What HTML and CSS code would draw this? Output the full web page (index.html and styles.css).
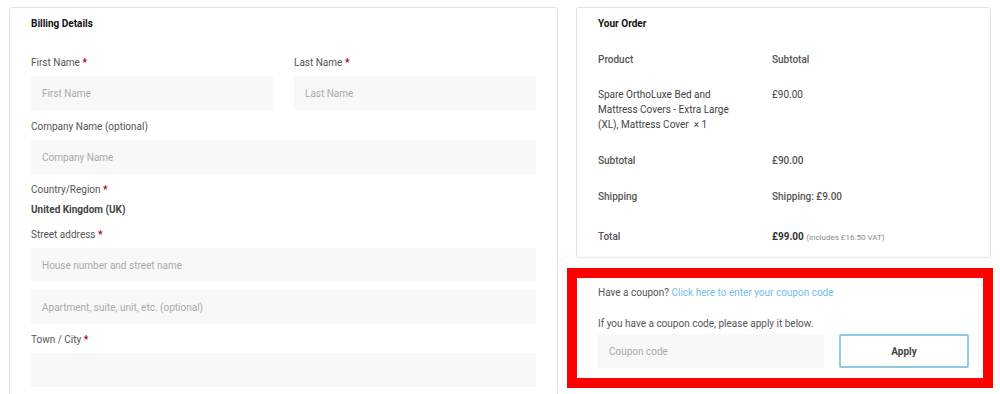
FILE: index.html
```html
<!DOCTYPE html>
<html lang="en">
<head>
  <meta charset="UTF-8">
  <title>Checkout</title>
  <link rel="stylesheet" href="styles.css">
</head>
<body>

<div class="checkout">
  <div class="card billing">
    <h3>Billing Details</h3>

    <div class="row">
      <div class="form-group">
        <label>First Name <abbr>*</abbr></label>
        <input type="text" placeholder="First Name">
      </div>
      <div class="form-group">
        <label>Last Name <abbr>*</abbr></label>
        <input type="text" placeholder="Last Name">
      </div>
    </div>

    <div class="form-group">
      <label>Company Name (optional)</label>
      <input type="text" placeholder="Company Name">
    </div>

    <div class="form-group tight">
      <label>Country/Region <abbr>*</abbr></label>
      <strong class="country">United Kingdom (UK)</strong>
    </div>

    <div class="form-group">
      <label>Street address <abbr>*</abbr></label>
      <input type="text" placeholder="House number and street name">
    </div>

    <div class="form-group">
      <input type="text" placeholder="Apartment, suite, unit, etc. (optional)">
    </div>

    <div class="form-group">
      <label>Town / City <abbr>*</abbr></label>
      <input type="text">
    </div>

    <div class="form-group">
      <label>Postcode <abbr>*</abbr></label>
      <input type="text">
    </div>
  </div>

  <div class="side">
    <div class="card order">
      <h3>Your Order</h3>
      <table>
        <tr class="head">
          <td class="name">Product</td>
          <td>Subtotal</td>
        </tr>
        <tr class="item">
          <td class="name">Spare OrthoLuxe Bed and Mattress Covers - Extra Large (XL), Mattress Cover&nbsp;&nbsp;<span class="qty">×&nbsp;1</span></td>
          <td>£90.00</td>
        </tr>
        <tr class="sum">
          <td class="name">Subtotal</td>
          <td>£90.00</td>
        </tr>
        <tr class="sum">
          <td class="name">Shipping</td>
          <td>Shipping: £9.00</td>
        </tr>
        <tr class="sum total">
          <td class="name">Total</td>
          <td><strong>£99.00</strong> <small>(includes £16.50 VAT)</small></td>
        </tr>
      </table>
    </div>

    <div class="coupon">
      <p>Have a coupon? <a href="#">Click here to enter your coupon code</a></p>
      <p class="hint">If you have a coupon code, please apply it below.</p>
      <div class="coupon-row">
        <input type="text" placeholder="Coupon code">
        <button>Apply</button>
      </div>
    </div>
  </div>
</div>

</body>
</html>
```

FILE: styles.css
```css
body {
  font-family: Roboto, "Liberation Sans", Arial, sans-serif;
  font-size: 10px;
  color: #555;
  background: #fff;
  margin: 0;
  padding: 7px 9px;
}

.checkout {
  display: flex;
  gap: 18px;
  align-items: flex-start;
}

.card {
  background: #fff;
  border: 1px solid #e3e3e3;
  border-radius: 3px;
}

h3 {
  margin: 0;
  font-size: 10px;
  line-height: 16px;
  font-weight: 700;
  color: #111;
}

.billing {
  width: 549px;
  box-sizing: border-box;
  padding: 8px 21px 30px;
}

.billing h3 {
  margin-bottom: 23px;
}

.row {
  display: flex;
  gap: 21px;
}

.row .form-group {
  flex: 1;
  margin-bottom: 9px;
}

.form-group {
  margin-bottom: 8px;
}

.form-group.tight {
  margin-bottom: 9px;
}

label {
  display: block;
  line-height: 16px;
  margin-bottom: 5px;
  color: #555;
}

abbr {
  color: #a3001b;
  text-decoration: none;
  font-weight: 700;
}

.country {
  display: block;
  line-height: 16px;
  margin-top: -1px;
  color: #444;
}

input[type="text"] {
  display: block;
  width: 100%;
  box-sizing: border-box;
  height: 34px;
  padding: 0 11px;
  border: none;
  border-radius: 0;
  background: #f8f8f8;
  font-family: inherit;
  font-size: 10px;
  color: #444;
}

input::placeholder {
  color: #aaa;
}

.side {
  width: 415px;
  display: flex;
  flex-direction: column;
}

.order {
  padding: 8px 21px 2px;
}

.order table {
  width: 100%;
  border-collapse: collapse;
  margin-top: 10px;
}

.order td {
  padding: 10px 0;
  line-height: 15px;
  vertical-align: top;
  font-weight: 500;
}

.order td.name {
  width: 174px;
  padding-right: 28px;
  box-sizing: border-box;
}

.order .item td {
  font-weight: 400;
  color: #444;
}

.order .sum td {
  padding: 11px 0 10px;
}

.order .total td {
  padding-top: 15px;
}

.order .total strong {
  color: #333;
}

.order small {
  font-size: 8px;
  font-weight: 400;
  color: #888;
}

.coupon {
  margin: 10px -2px 0 -9px;
  border: 10px solid #ff0000;
  padding: 7px 14px 10px 21px;
  background: #fff;
}

.coupon p {
  margin: 0;
  line-height: 16px;
}

.coupon a {
  color: #6ec1e4;
  text-decoration: none;
}

.coupon .hint {
  margin-top: 15px;
  margin-bottom: 2px;
}

.coupon-row {
  display: flex;
  gap: 15px;
}

.coupon-row input[type="text"] {
  width: 226px;
  flex: none;
}

.coupon-row button {
  flex: 1;
  height: 34px;
  background: #fff;
  border: 2px solid #8fcadd;
  border-radius: 2px;
  font-family: inherit;
  font-size: 10px;
  font-weight: 700;
  color: #444;
  cursor: pointer;
}
```
